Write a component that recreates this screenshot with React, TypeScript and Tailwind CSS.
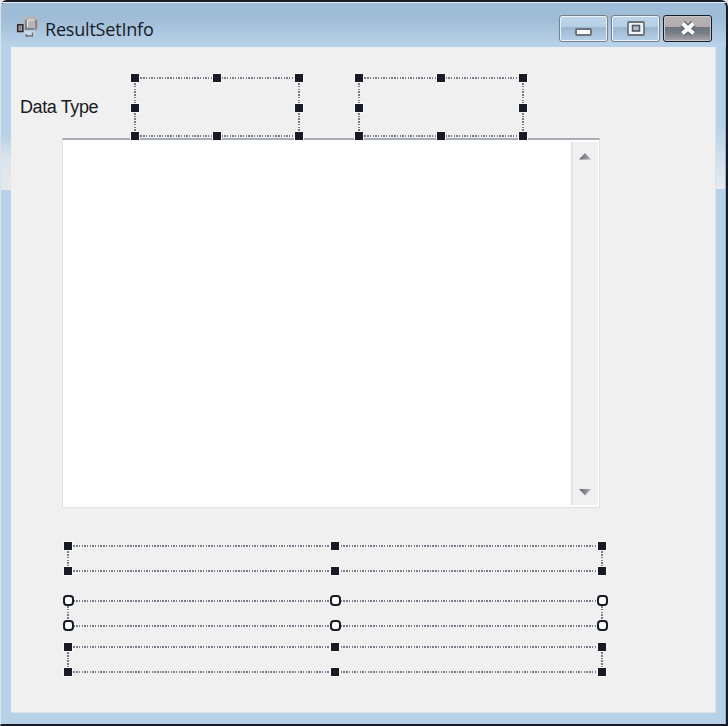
import React from "react";

const DOTS_X =
  "bg-[repeating-linear-gradient(to_right,#596070_0px,#596070_1.4px,#f4f4f4_1.4px,#f4f4f4_2.7px)]";
const DOTS_Y =
  "bg-[repeating-linear-gradient(to_bottom,#596070_0px,#596070_1.4px,#f4f4f4_1.4px,#f4f4f4_2.7px)]";

function Handle({ place, round }: { place: string; round?: boolean }) {
  return round ? (
    <span
      className={`absolute ${place} h-[11px] w-[11px] -translate-x-[5px] -translate-y-[6px] rounded-[4px] border-2 border-[#181c26] bg-white`}
    />
  ) : (
    <span
      className={`absolute ${place} h-2 w-2 -translate-x-1 -translate-y-1 bg-[#181b26] shadow-[0_0_0_1px_#fafafa]`}
    />
  );
}

function Selection({ className, sides, round }: { className: string; sides?: boolean; round?: boolean }) {
  return (
    <div className={`relative shrink-0 ${className}`}>
      <i className={`absolute inset-x-0 top-[-1px] h-[2px] opacity-80 ${DOTS_X}`} />
      <i className={`absolute inset-x-0 bottom-[-1px] h-[2px] opacity-80 ${DOTS_X}`} />
      <i className={`absolute inset-y-0 left-[-1px] w-[2px] opacity-80 ${DOTS_Y}`} />
      <i className={`absolute inset-y-0 right-[-1px] w-[2px] opacity-80 ${DOTS_Y}`} />
      <Handle place="left-0 top-0" round={round} />
      <Handle place="left-1/2 top-0" round={round} />
      <Handle place="left-full top-0" round={round} />
      <Handle place="left-0 top-full" round={round} />
      <Handle place="left-1/2 top-full" round={round} />
      <Handle place="left-full top-full" round={round} />
      {sides && <Handle place="left-0 top-[30px]" />}
      {sides && <Handle place="left-full top-[30px]" />}
    </div>
  );
}

function FormIcon() {
  return (
    <svg className="h-[24px] w-[24px]" viewBox="0 0 24 24">
      <rect x="8" y="1.5" width="14" height="13.5" rx="2" fill="#b9b4b2" />
      <path d="M10 5v9h8" stroke="#6d7681" strokeWidth="1.6" fill="none" />
      <path d="M18.8 14.5a2 2 0 0 0 1.4-2V5" stroke="#737b86" strokeWidth="1.6" fill="none" />
      <path d="M11.5 12V6.5a1.5 1.5 0 0 1 1.5-1.5h5" stroke="#e8e8e8" strokeWidth="1.2" fill="none" />
      <rect x="0" y="8" width="8" height="10" rx="1.5" fill="#b9b4b2" />
      <rect x="1.8" y="9.8" width="5" height="6.6" fill="#b9b4b2" stroke="#222631" strokeWidth="1.5" />
      <path d="M4.3 11.5v3" stroke="#4a505c" />
      <rect x="8.5" y="16" width="10" height="6" rx="1" fill="#cbd8e4" />
      <path d="M10 19v2h6.5v-3.5" stroke="#646c78" strokeWidth="1.3" fill="none" />
    </svg>
  );
}

function CaptionButton({ close, children }: { close?: boolean; children: React.ReactNode }) {
  const look = close
    ? "border-[#181b26] bg-[linear-gradient(#bbb3b2_0,#b1abad_45%,#6d757f_46%,#777e87_68%,#aaa6a9_100%)] shadow-[inset_0_0_0_1px_#c9c6c7]"
    : "border-[#77818d] bg-[linear-gradient(#bcd5ea_0,#b5cfe5_45%,#9cb8d0_46%,#b5d0e7_100%)] shadow-[inset_0_0_0_1px_#edf2f6]";
  return (
    <button className={`flex h-[27px] w-[49px] items-center justify-center rounded-[3px] border-[1.5px] ${look}`}>
      {children}
    </button>
  );
}

function Arrow({ down }: { down?: boolean }) {
  return (
    <svg className="mr-px h-[7px] w-[12px]" viewBox="0 0 12 7">
      <defs>
        <linearGradient id={down ? "ad" : "au"}>
          <stop offset="0" stopColor="#596270" />
          <stop offset="1" stopColor="#b7b4b5" />
        </linearGradient>
      </defs>
      <path d={down ? "M0 0H12L6 6.5Z" : "M0 6.5H12L6 0Z"} fill={down ? "url(#ad)" : "url(#au)"} />
    </svg>
  );
}

export default function App() {
  return (
    <div className="h-[726px] w-[728px] overflow-hidden bg-[#e3e6e8]">
      <div className="flex h-full flex-col rounded-t-[7px] border-t-2 border-r-2 border-b-2 border-l border-t-[#181b26] border-r-[#181b26] border-b-[#181b26] border-l-[#dce2e7] bg-[linear-gradient(#a0bdd7_0,#a0bdd7_18px,#b7d1e8_42px)]">
        <header className="flex h-[45px] shrink-0 items-start border-t border-[#e9eef2] pr-[14px] pl-[15px]">
          <div className="mt-[12px]">
            <FormIcon />
          </div>
          <h1 className="mt-[14px] ml-[5px] font-['Open_Sans','Noto_Sans',sans-serif] text-[18px] leading-[24px] tracking-[-0.2px] text-[#181b26]">
            ResultSetInfo
          </h1>
          <div className="mt-[12px] ml-auto flex gap-[3px]">
            <CaptionButton>
              <i className="mt-[6px] h-[8px] w-[17px] rounded-[2px] border-2 border-[#6b7480] bg-white" />
            </CaptionButton>
            <CaptionButton>
              <svg className="h-[15px] w-[18px]" viewBox="0 0 18 15">
                <rect x="1" y="1" width="16" height="13" rx="1" fill="#f4f4f4" stroke="#6b7480" strokeWidth="1.8" />
                <rect x="5.5" y="4.5" width="7" height="5.5" fill="#b4bcc7" stroke="#515967" strokeWidth="1.6" />
              </svg>
            </CaptionButton>
            <CaptionButton close>
              <svg className="h-[15px] w-[18px]" viewBox="0 0 18 15">
                <path d="M3.5 2.5L14.5 12.5M14.5 2.5L3.5 12.5" stroke="#5c6370" strokeWidth="6.5" />
                <path d="M3.5 2.5L14.5 12.5M14.5 2.5L3.5 12.5" stroke="#ffffff" strokeWidth="4" />
              </svg>
            </CaptionButton>
          </div>
        </header>

        <div className="flex min-h-0 flex-1">
          <div className="flex w-[10px] shrink-0 flex-col">
            <div className="h-[88px] bg-[#b7d1e8]" />
            <div className="h-[55px] bg-[linear-gradient(#b7d1e8,#dce5ed_45%,#e4e8eb)]" />
            <div className="flex-1 bg-[#b7d1e8]" />
          </div>
          <main className="mb-[11px] flex min-w-0 flex-1 flex-col border-r border-b border-[#dee1e4] bg-[#f0f0f0]">
            <div className="flex h-[91px] items-start pt-[31px]">
              <label className="mt-[17px] w-[124px] shrink-0 pl-[9px] font-['Liberation_Sans',Arial,sans-serif] text-[18px] leading-[24px] tracking-[-0.4px] whitespace-nowrap text-[#181b26]">
                Data Type
              </label>
              <Selection className="z-10 h-[58px] w-[164px]" sides />
              <Selection className="z-10 ml-[60px] h-[58px] w-[164px]" sides />
            </div>
            <div className="ml-[51px] flex h-[370px] w-[538px] shrink-0 border border-t-2 border-[#dce1e7] border-t-[#a9adb5] bg-white">
              <div className="flex-1" />
              <div className="my-[2px] mr-px flex w-[27px] flex-col items-center justify-between border-l-2 border-[#dfe3e8] bg-[#f0f0f0] pt-[11px] pb-[9px]">
                <Arrow />
                <Arrow down />
              </div>
            </div>
            <div className="mt-[38px] ml-[57px] flex flex-col">
              <Selection className="h-[25px] w-[534px]" />
              <Selection className="mt-[30px] h-[25px] w-[534px]" round />
              <Selection className="mt-[21px] h-[25px] w-[534px]" />
            </div>
          </main>
          <div className="flex w-[10px] shrink-0 flex-col border-r border-[#91b1cc]">
            <div className="h-[78px] bg-[#b7d1e8]" />
            <div className="h-[64px] bg-[linear-gradient(to_bottom,#b7d1e8,#cfdeeb_50%,#e7eaed)]" />
            <div className="flex-1 bg-[#b7d1e8]" />
          </div>
        </div>
      </div>
    </div>
  );
}
